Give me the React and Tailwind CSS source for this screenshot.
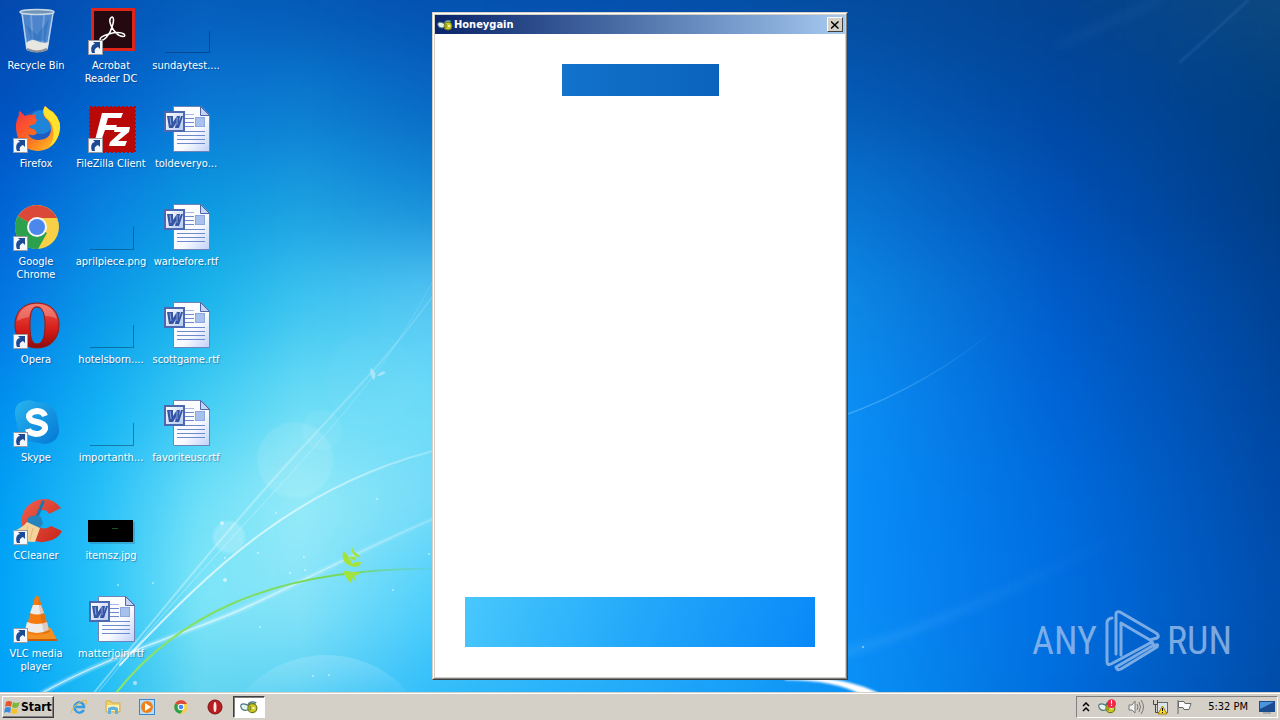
import React from "react";

/* Sky colours, sampled left to right, one band per hundred units of height. */
const STOPS = [0, 100, 200, 300, 430, 640, 860, 1060, 1280];
const BANDS = [
  ["#0448ac", "#0452b4", "#045cba", "#0458b6", "#0450b0", "#044eaa", "#044b9e", "#034390", "#0d4880"],
  ["#0050be", "#0062cc", "#0a76d4", "#0a7ad0", "#0868c4", "#0864c4", "#0459b4", "#0047a0", "#003f80"],
  ["#0062d2", "#0880e0", "#0a98e0", "#1a9ee0", "#148cd8", "#1084d8", "#0872d0", "#0050b6", "#003c84"],
  ["#0474e2", "#0a98e8", "#18b4ec", "#3cc4f0", "#56c8f4", "#30a8ee", "#0c86e4", "#005cca", "#004294"],
  ["#008eee", "#10b0f4", "#40ccf4", "#6adcf6", "#6cdcf8", "#3cb4f6", "#0a8cf2", "#0064d6", "#00469e"],
  ["#009ef4", "#28c0f8", "#70e0f8", "#98ecf8", "#78dcf8", "#40b8fa", "#088cf8", "#006cde", "#004aa8"],
  ["#00a4f8", "#28c4f8", "#80e6f8", "#88e4f8", "#50d0fc", "#30b4fc", "#0a8cf8", "#006ee2", "#004eae"],
  ["#00a0f8", "#20bcf4", "#60d4f0", "#58d0f4", "#30bcfa", "#20a8fa", "#0890f4", "#006cdc", "#004ca8"],
];

const SPARKS = [
  [222, 523, 2], [276, 513, 1], [225, 580, 2], [304, 557, 1], [258, 553, 1], [305, 570, 1],
  [377, 499, 1], [290, 573, 1], [118, 585, 1], [153, 583, 1], [225, 558, 1], [135, 683, 2],
  [260, 627, 1], [313, 676, 1], [329, 675, 1], [393, 590, 1], [429, 554, 1], [863, 647, 1],
];

function Wallpaper() {
  return (
    <svg className="absolute inset-0 h-full w-full" viewBox="0 0 1280 692" preserveAspectRatio="none" aria-hidden="true">
      <defs>
        {BANDS.map((band, i) => (
          <linearGradient key={i} id={`band${i}`} gradientUnits="userSpaceOnUse" x1="0" x2="1280" y1="0" y2="0">
            {band.map((c, j) => <stop key={j} offset={STOPS[j] / 1280} stopColor={c} />)}
          </linearGradient>
        ))}
        <filter id="melt" filterUnits="userSpaceOnUse" x="-100" y="-200" width="1480" height="1100" colorInterpolationFilters="sRGB">
          <feGaussianBlur stdDeviation="8 38" />
        </filter>
        <filter id="soft"><feGaussianBlur stdDeviation="1" /></filter>
        <filter id="softer"><feGaussianBlur stdDeviation="4" /></filter>
        <linearGradient id="ray" x1="0" x2="1" y1="0" y2="0">
          <stop offset="0" stopColor="#fff" stopOpacity=".75" />
          <stop offset=".5" stopColor="#fff" stopOpacity=".6" />
          <stop offset="1" stopColor="#fff" stopOpacity=".2" />
        </linearGradient>
        <linearGradient id="fade" x1="0" x2="1" y1="0" y2="0">
          <stop offset="0" stopColor="#7cc8ff" stopOpacity=".5" />
          <stop offset="1" stopColor="#7cc8ff" stopOpacity="0" />
        </linearGradient>
        <linearGradient id="stem" gradientUnits="userSpaceOnUse" x1="115" x2="445" y1="0" y2="0">
          <stop offset="0" stopColor="#8ee46a" />
          <stop offset=".7" stopColor="#74d85c" />
          <stop offset="1" stopColor="#58d0c8" stopOpacity=".2" />
        </linearGradient>
        <linearGradient id="dome" gradientUnits="userSpaceOnUse" x1="0" x2="0" y1="655" y2="700">
          <stop offset="0" stopColor="#d8f4ff" stopOpacity=".22" />
          <stop offset="1" stopColor="#fff" stopOpacity="0" />
        </linearGradient>
      </defs>
      <g filter="url(#melt)">
        {BANDS.map((_, i) => (
          <rect key={i} x="-60" width="1400" y={i === 0 ? -200 : i * 100 - 50} height={i === 0 ? 251 : i === 7 ? 300 : 101} fill={`url(#band${i})`} />
        ))}
      </g>
      <circle cx="295" cy="460" r="38" fill="#fff" opacity=".1" filter="url(#soft)" />
      <circle cx="322" cy="430" r="20" fill="#fff" opacity=".06" filter="url(#soft)" />
      <circle cx="229" cy="537" r="16" fill="#fff" opacity=".2" filter="url(#soft)" />
      <circle cx="372" cy="380" r="46" fill="#fff" opacity=".025" />
      <ellipse cx="326" cy="755" rx="105" ry="100" fill="url(#dome)" />
      <g fill="none" strokeLinecap="round">
        <path d="M88 700C170 600 240 515 300 450S395 350 440 286" stroke="url(#ray)" strokeWidth="2" opacity=".5" />
        <path d="M92 700C180 590 250 520 310 452S400 345 436 275" stroke="url(#ray)" strokeWidth="1" opacity=".5" />
        <path d="M120 665C210 570 300 480 450 447" stroke="url(#ray)" strokeWidth="2" />
        <path d="M42 693C110 655 190 632 240 610S370 545 440 516" stroke="url(#ray)" strokeWidth="4" opacity=".6" filter="url(#soft)" />
        <path d="M42 693C110 655 190 632 240 610S370 545 440 516" stroke="url(#ray)" strokeWidth="1" />
        <path d="M116 693C170 625 260 565 445 569" stroke="url(#stem)" strokeWidth="2" />
        <path d="M840 417Q930 385 1000 325" stroke="url(#fade)" strokeWidth="1.500" />
        <path d="M840 654Q960 620 1140 525" stroke="url(#fade)" strokeWidth="8" opacity=".4" filter="url(#softer)" />
        <path d="M1180 62Q1210 36 1248 0" stroke="#4484c4" strokeWidth="2" opacity=".3" filter="url(#soft)" />
        <path d="M1060 45L1160 0" stroke="#4484c4" strokeWidth="8" opacity=".1" filter="url(#softer)" />
      </g>
      <path d="M785 676Q848 676 882 695H862Q835 680 785 680Z" fill="#fff" filter="url(#soft)" />
      <g fill="#a4e23c">
        <path d="M343 551Q341 561 348 565L354 567Q361 567 361 562Q355 561 352 564Q350 556 343 551Z" />
        <path d="M352 547Q351 553 355 556L361 558Q358 554 356 553Q353 551 352 547ZM355 557Q351 556 349 557Q352 561 356 560Z" />
        <path d="M343 571L350 571Q353 577 351 583Q346 579 343 571ZM351 572H360Q358 577 354 575Q356 579 354 581Q351 577 351 572Z" />
      </g>
      <path d="M371 368Q368 374 374 380Q378 373 371 368ZM377 376Q381 370 386 372Q383 376 377 376Z" fill="#a8e4f8" />
      {SPARKS.map(([x, y, r]) => <circle key={`${x}-${y}`} cx={x} cy={y} r={r} fill="#fff" opacity=".55" />)}
    </svg>
  );
}

function Shortcut() {
  return (
    <g>
      <rect x="0.500" y="33.500" width="14" height="14" fill="#f4f7fc" stroke="#9a9aa0" />
      <path d="M4 46C2 41 4 37 7 37L5 35H12V42L10 40C7 41 6 43 7 46Z" fill="#1c4a94" />
    </g>
  );
}

function WordArt() {
  return (
    <g>
      <path d="M12 2H37L47 11V47H12Z" fill="#20406a" opacity=".3" />
      <path d="M10.500 1.500H38L46.500 10V46.500H10.500Z" fill="url(#paper)" stroke="#7084b8" />
      <path d="M37.500 1.500V10.500H46.500Z" fill="#c4d4f4" stroke="#5068a8" />
      <path d="M22 13.500H31M22 17.500H31M22 21.500H31M14 26.500H42M14 30.500H42M14 34.500H42M14 38.500H42" stroke="#6c8acc" />
      <path d="M22 9.500H31" stroke="#a8b8e0" />
      <rect x="32.500" y="12.500" width="9" height="9" fill="#a8c0ec" stroke="#8ca8e0" />
      <rect x="2" y="7" width="19" height="19" fill="url(#wbox)" stroke="#4c68b0" strokeWidth="2" />
      <path d="M4 11H10L10 17L14 11H17L16 17L18 11H20L16 23H12L13 18L10 23H6Z" fill="#3454a4" />
      <path d="M7 12L8 20M14 12L14 20" stroke="#90a8dc" fill="none" />
    </g>
  );
}

const ART = {
  bin: (
    <g>
      <path d="M8 4L13 43Q24 48 35 43L41 4Z" fill="#a8c8e8" opacity=".45" />
      <path d="M9 6L14 42M40 6L34 42" stroke="#e0f0ff" opacity=".7" strokeWidth="1.500" />
      <path d="M18 8L20 40M31 8L29 40" stroke="#e0f0ff" opacity=".25" strokeWidth="2" />
      <path d="M13 18L24 28L36 12L32 34L18 32Z" fill="#2468b8" opacity=".45" />
      <path d="M13 36Q18 31 24 34T36 35L34 43Q24 47 14 43Z" fill="#e8e6e0" />
      <path d="M14 42Q24 47 34 42" fill="none" stroke="#8a9098" strokeWidth="2" />
      <ellipse cx="24" cy="5" rx="17" ry="2.500" fill="#7094b8" stroke="#c8d8e4" strokeWidth="1.500" />
    </g>
  ),
  acrobat: (
    <g>
      <rect x="3" y="1" width="44" height="43" fill="#e02418" />
      <rect x="6" y="4" width="38" height="37" fill="#240a10" />
      <path d="M22 12C25 7 27 12 24 20C22 28 15 35 12 33C11 29 29 23 36 27C39 30 33 31 28 26C24 22 21 15 22 12Z" fill="none" stroke="#fff" strokeWidth="1.500" />
      <Shortcut />
    </g>
  ),
  firefox: (
    <g>
      <circle cx="26" cy="24" r="19" fill="#1c5cc4" />
      <circle cx="28" cy="17" r="12" fill="#20a0e8" opacity=".6" />
      <path d="M6 10Q5 7 7 6L12 11Q16 9 20 10L23 9Q21 12 24 15L22 19L16 21Q17 24 21 24L24 28Q21 32 15 29Q18 35 26 35Q38 34 38 24Q38 17 32 13Q28 7 32 1Q36 5 40 7Q50 17 46 29Q41 45 25 46Q8 45 4 30Q1 18 6 10Z" fill="url(#fox)" />
      <path d="M32 1Q36 5 40 7Q50 17 46 29Q43 38 36 42Q42 34 40 24Q39 17 33 13Q28 7 32 1Z" fill="#ffe22c" />
      <Shortcut />
    </g>
  ),
  filezilla: (
    <g>
      <rect x="2" y="2" width="45" height="45" fill="#b80808" stroke="#b80808" strokeWidth="2" strokeDasharray="2 2" />
      <path d="M14 8H35L33 13H20L18 20H29L27 25H17L12 39H6ZM27 22H42L41 27L30 36H39L37 41H21L22 37L33 27H26Z" fill="#fff" />
      <Shortcut />
    </g>
  ),
  chrome: (
    <g>
      <circle cx="24" cy="24" r="22" fill="#f8d048" />
      <path d="M24 24L5 13A22 22 0 0 0 25 46L34 30Z" fill="#2ca04c" />
      <path d="M24 24L5 13A22 22 0 0 1 44 15H24Z" fill="#dc4838" />
      <circle cx="24" cy="24" r="10" fill="#f4f6f8" />
      <circle cx="24" cy="24" r="8" fill="#4c88ec" />
      <Shortcut />
    </g>
  ),
  opera: (
    <g>
      <path fillRule="evenodd" d="M24 2C10 2 2 11 2 24S10 47 24 47S46 37 46 24S38 2 24 2ZM24 6C30 6 32 14 32 24S30 43 24 43S17 34 17 24S18 6 24 6Z" fill="url(#opera)" stroke="#901c18" strokeWidth="1" />
      <path d="M24 3C13 3 5 10 4 20Q9 17 16 16C18 8 20 5 24 5S30 8 32 15Q39 15 44 18C42 9 35 3 24 3Z" fill="#fff" opacity=".25" />
      <Shortcut />
    </g>
  ),
  skype: (
    <g>
      <path d="M6 4Q15-1 23 3Q44 3 45 24Q48 33 43 40Q35 47 27 44Q5 43 4 25Q-1 10 6 4Z" fill="url(#skype)" />
      <path d="M32 17Q30 12 24 12Q16 13 16 18Q17 22 24 23Q33 25 32 30Q30 35 23 35Q16 34 15 30" fill="none" stroke="#fff" strokeWidth="6" />
      <Shortcut />
    </g>
  ),
  ccleaner: (
    <g>
      <path d="M48 11Q36-3 20 5Q5 14 10 32Q19 49 35 44Q45 42 49 34L38 29Q29 35 24 27Q21 18 27 14Q33 11 36 17Z" fill="url(#cclean)" />
      <path d="M30 5L24 20" stroke="#1878b4" strokeWidth="3" strokeLinecap="round" />
      <path d="M15 21Q20 17 28 20L30 27L26 31L14 26Z" fill="#2484bc" />
      <path d="M14 25L27 31L22 45L4 44L1 34Q9 31 14 25Z" fill="#f4d49c" />
      <path d="M15 29L11 42M20 31L17 43" stroke="#e0b874" />
      <Shortcut />
    </g>
  ),
  vlc: (
    <g>
      <path d="M11 33H38L44 45H4Z" fill="#f49020" />
      <path d="M4 44H44V46H4Z" fill="#c85c08" />
      <path d="M22 2Q24 0 26 2L37 37Q24 43 12 37Z" fill="#f47c10" />
      <path d="M20 10H28L31 18Q24 21 17 18ZM14 27Q24 31 34 27L36 35Q24 41 12 35Z" fill="#ececec" />
      <path d="M26 4L37 37L31 39L25 6Z" fill="#a84808" opacity=".2" />
      <Shortcut />
    </g>
  ),
  word: <WordArt />,
  blank: <path d="M2 46.500H45.500V24" fill="none" stroke="#003a60" opacity=".5" />,
  blankTop: <path d="M2 45.500H46.500V24" fill="none" stroke="#002860" opacity=".5" />,
  picture: (
    <g>
      <rect x="2" y="25" width="45" height="22" fill="#246080" opacity=".3" />
      <rect x="0" y="23" width="45" height="22" fill="#000" />
      <path d="M24 31.500H30" stroke="#185820" />
    </g>
  ),
};

const ICONS = [
  ["Recycle Bin", "bin"], ["Firefox", "firefox"], ["Google Chrome", "chrome"], ["Opera", "opera"],
  ["Skype", "skype"], ["CCleaner", "ccleaner"], ["VLC media player", "vlc"],
  ["Acrobat Reader DC", "acrobat"], ["FileZilla Client", "filezilla"], ["aprilpiece.png", "blank"],
  ["hotelsborn....", "blank"], ["importanth...", "blank"], ["itemsz.jpg", "picture"], ["matterjoin.rtf", "word"],
  ["sundaytest....", "blankTop"], ["toldeveryo...", "word"], ["warbefore.rtf", "word"],
  ["scottgame.rtf", "word"], ["favoriteusr.rtf", "word"],
];

function SharedPaint() {
  const ramp = (id, a, b) => (
    <linearGradient id={id} x1="0" y1="0" x2="1" y2="1"><stop offset="0" stopColor={a} /><stop offset="1" stopColor={b} /></linearGradient>
  );
  return (
    <svg className="absolute h-0 w-0" aria-hidden="true">
      <defs>
        {ramp("wbox", "#ffffff", "#b4c8f0")}
        {ramp("skype", "#28b4f0", "#0478d4")}
        {ramp("cclean", "#f0604c", "#c82418")}
        <linearGradient id="paper" x1="0" y1="0" x2="1" y2="1">
          <stop offset="0" stopColor="#fff" /><stop offset=".6" stopColor="#f8faff" /><stop offset="1" stopColor="#c0d0f8" />
        </linearGradient>
        <linearGradient id="fox" x1="0" y1="0" x2="1" y2="1">
          <stop offset="0" stopColor="#f42c48" /><stop offset=".5" stopColor="#ff6820" /><stop offset="1" stopColor="#ffd428" />
        </linearGradient>
        <linearGradient id="opera" x1="0" y1="0" x2="0" y2="1">
          <stop offset="0" stopColor="#f05848" /><stop offset=".6" stopColor="#d41c18" /><stop offset="1" stopColor="#8c0c0c" />
        </linearGradient>
      </defs>
    </svg>
  );
}

function DesktopIcon({ label, art }) {
  return (
    <button type="button" className="flex w-18 flex-col items-center gap-1 pt-[7px] text-center text-[11px] leading-[13px] text-white [text-shadow:1px_1px_1px_rgba(0,30,80,0.4)]">
      <svg className="ml-[2px] size-12 shrink-0 overflow-visible" viewBox="0 0 48 48" aria-hidden="true">{ART[art]}</svg>
      <span>{label}</span>
    </button>
  );
}

function Bee({ className, alert }) {
  return (
    <svg className={className} viewBox="0 0 16 16" aria-hidden="true">
      <path d="M1 6Q3 4 8 7L9 10Q4 12 2 10Q0 8 1 6Z" fill="#e4f4ec" stroke="#4c7480" />
      <path d="M7 6Q9 2 14 4L11 7Z" fill="#88c4c8" stroke="#4c7480" />
      <circle cx="11" cy="9" r="4" fill="#ccc828" stroke="#6c7818" />
      <path d="M9 7L9 11" stroke="#6c7818" />
      <circle cx="12" cy="9" r="1" fill="#fffce0" />
      {alert && <g><circle cx="12" cy="5" r="4" fill="#f02848" /><path d="M12 2V5M12 6V7" stroke="#fff" /></g>}
    </svg>
  );
}

function HoneygainWindow() {
  return (
    <section aria-label="Honeygain" className="absolute left-1/2 top-3 flex h-[668px] w-[416px] -translate-x-1/2 flex-col border border-b-[#404040] border-l-[#d4d0c8] border-r-[#404040] border-t-[#d4d0c8] bg-[#d4d0c8]">
      <div className="flex flex-1 flex-col border border-b-[#808080] border-l-white border-r-[#808080] border-t-white p-px">
        <header className="flex h-[19px] items-center gap-px bg-linear-to-r from-[#0a246a] to-[#a6caf0] pl-[2px] pr-[2px]">
          <Bee className="size-4" />
          <h1 className="flex-1 text-[11px] font-bold leading-[13px] text-white">Honeygain</h1>
          <button type="button" aria-label="Close" className="flex h-[15px] w-4 items-center justify-center border border-b-[#404040] border-l-white border-r-[#404040] border-t-white bg-[#d4d0c8]">
            <svg className="h-2 w-2" viewBox="0 0 8 8" aria-hidden="true"><path d="M0 .5L7.500 7.500M7.500 .5L0 7.500" stroke="#000" strokeWidth="1.500" /></svg>
          </button>
        </header>
        <div className="flex flex-1 flex-col items-center justify-between bg-white px-7 py-[30px]">
          <div className="h-8 w-[157px] bg-linear-to-r from-[#1272cc] to-[#0a64bc]" />
          <button type="button" aria-label="Continue" className="h-[50px] w-[350px] bg-linear-[110deg] from-[#48c8fc] via-[#22a8fa] to-[#0888f8]" />
        </div>
      </div>
    </section>
  );
}

function Watermark() {
  return (
    <div className="absolute bottom-5 right-12 flex items-center gap-[7px] font-['Roboto_Condensed','Open_Sans_Condensed','Liberation_Sans_Narrow',sans-serif] text-[38px] leading-[62px] text-[#a4c4ec]/75">
      <span>ANY</span>
      <svg className="h-[62px] w-14" viewBox="0 0 56 62" fill="none" stroke="currentColor" strokeWidth="3" strokeLinejoin="round" strokeLinecap="round" aria-hidden="true">
        <path d="M8 8Q3 9 3 13V51Q3 56 7 54L48 32L50 36Q55 33 53 37L17 59Q13 61 12 57L50 35M12 44V4Q12 1 16 2L52 23Q56 26 53 28L46 30L17 13V45" />
      </svg>
      <span>RUN</span>
    </div>
  );
}

const LAUNCHERS = [
  ["Internet Explorer", <g key="a"><path d="M13 11Q10 15 6 13Q2 10 4 6Q8 1 12 5Q13 7 13 8H5" fill="none" stroke="#349ce4" strokeWidth="2.500" /><path d="M1 14Q-1 12 5 6Q11 1 15 1Q17 2 14 6" fill="none" stroke="#ecb830" strokeWidth="1" /></g>],
  ["Explorer", <g key="b"><path d="M1 2H6L7 4H15V13H1Z" fill="#f0d068" stroke="#d4b050" /><path d="M2 6H14V12H2Z" fill="#fcf0b4" /><path d="M3 15V9Q8 6 13 9V15H10V11H6V15Z" fill="#60b0e0" /></g>],
  ["Media Player", <g key="c"><rect x=".5" y=".5" width="15" height="15" fill="#b8dcf8" stroke="#3888cc" /><circle cx="8" cy="8" r="6" fill="#f08018" /><path d="M6 4L12 8L6 12Z" fill="#fff" /></g>],
  ["Chrome", <g key="d" transform="scale(.3333)"><circle cx="24" cy="24" r="20" fill="#f8d048" /><path d="M24 24L7 13A20 20 0 0 0 22 44L32 30Z" fill="#2ca04c" /><path d="M24 24L7 13A20 20 0 0 1 42 15H24Z" fill="#dc4838" /><circle cx="24" cy="24" r="10" fill="#fff" /><circle cx="24" cy="24" r="7" fill="#4488f0" /></g>],
  ["Opera", <g key="e"><circle cx="8" cy="8" r="7" fill="#bc1c20" stroke="#781418" /><ellipse cx="8" cy="8" rx="1.500" ry="5" fill="#f4e8e8" /></g>],
];

function Taskbar() {
  return (
    <footer className="flex h-7 items-center justify-between border-t border-[#d4d0c8] bg-[#d4d0c8] px-[2px] shadow-[inset_0_1px_0_#ffffff]">
      <nav className="flex items-center">
        <button type="button" className="flex h-[22px] w-13 items-center gap-px border border-b-[#404040] border-l-white border-r-[#404040] border-t-white px-px text-[12px] font-bold leading-4 text-black shadow-[inset_-1px_-1px_0_#808080]">
          <svg className="size-4 shrink-0" viewBox="0 0 16 16" aria-hidden="true">
            <path d="M2 3Q5 1 8 3L7 8Q4 6 1 8Z" fill="#e8542c" />
            <path d="M9 3Q12 5 16 3L14 8Q11 10 8 8Z" fill="#7cb83c" />
            <path d="M1 9Q4 7 7 9L6 14Q3 12 0 14Z" fill="#3c8cdc" />
            <path d="M8 9Q11 11 14 9L13 14Q10 16 7 14Z" fill="#f4c430" />
          </svg>
          <span>Start</span>
        </button>
        <div className="flex gap-[18px] pl-[17px] pr-[10px]">
          {LAUNCHERS.map(([name, art]) => (
            <button key={name} type="button" aria-label={name} className="size-4">
              <svg className="size-4" viewBox="0 0 16 16" aria-hidden="true">{art}</svg>
            </button>
          ))}
        </div>
        <button type="button" aria-label="Honeygain" className="flex h-[22px] w-8 items-center justify-center border border-b-white border-l-[#404040] border-r-white border-t-[#404040] bg-white shadow-[inset_1px_1px_0_#808080]">
          <Bee className="size-[18px]" />
        </button>
      </nav>
      <div className="flex h-[22px] items-center border border-b-white border-l-[#808080] border-r-white border-t-[#808080] pl-[5px] pr-[2px] text-[11px] leading-[13px] text-black">
        <svg className="h-[10px] w-2" viewBox="0 0 8 10" fill="none" stroke="#000" strokeWidth="1.5" aria-hidden="true"><path d="M1 4L4 1L7 4M1 9L4 6L7 9" /></svg>
        <Bee className="ml-2 size-[18px]" alert />
        <svg className="ml-3 size-4" viewBox="0 0 16 16" fill="none" stroke="#787878" aria-hidden="true">
          <path d="M1 6H4L7 2V14L4 11H1Z" fill="#f4f4f4" /><path d="M9 5Q11 8 9 11M11 3Q14 8 11 13M13 1Q18 8 13 15" />
        </svg>
        <svg className="ml-2 size-4" viewBox="0 0 16 16" aria-hidden="true">
          <rect x="5.500" y="3.500" width="10" height="10" fill="#dce4e8" stroke="#686868" />
          <path d="M1.500 1V5.500H5.500V1M3.500 5V13.500H7" fill="none" stroke="#484848" />
          <path d="M10.500 7L15 15H6Z" fill="#fcdc28" stroke="#a48010" /><path d="M10.500 9V12M10.500 13V14" stroke="#000" />
        </svg>
        <svg className="ml-2 size-4" viewBox="0 0 16 16" fill="#fafafa" stroke="#686868" aria-hidden="true">
          <path d="M2 1V15" /><path d="M2.500 2.500H8L9 4.500H15L13 10.500H8L7 8.500H2.500Z" />
        </svg>
        <time className="ml-4">5:32 PM</time>
        <svg className="ml-[11px] size-4" viewBox="0 0 16 16" aria-hidden="true">
          <rect x="0" y="2" width="16" height="11" fill="#1c4c90" /><path d="M1 3H15L1 10Z" fill="#4c94dc" /><path d="M4 14H12" stroke="#808890" />
        </svg>
      </div>
    </footer>
  );
}

export default function App() {
  return (
    <div className="flex min-h-screen flex-col overflow-hidden font-['DejaVu_Sans_Condensed','DejaVu_Sans',sans-serif]">
      <SharedPaint />
      <main className="relative flex-1 overflow-hidden bg-[#0a6cd4]">
        <Wallpaper />
        <div className="relative grid w-fit auto-cols-max grid-flow-col grid-rows-[repeat(7,98px)] gap-x-[3px]">
          {ICONS.map(([label, art]) => <DesktopIcon key={label} label={label} art={art} />)}
        </div>
        <Watermark />
        <HoneygainWindow />
      </main>
      <Taskbar />
    </div>
  );
}
